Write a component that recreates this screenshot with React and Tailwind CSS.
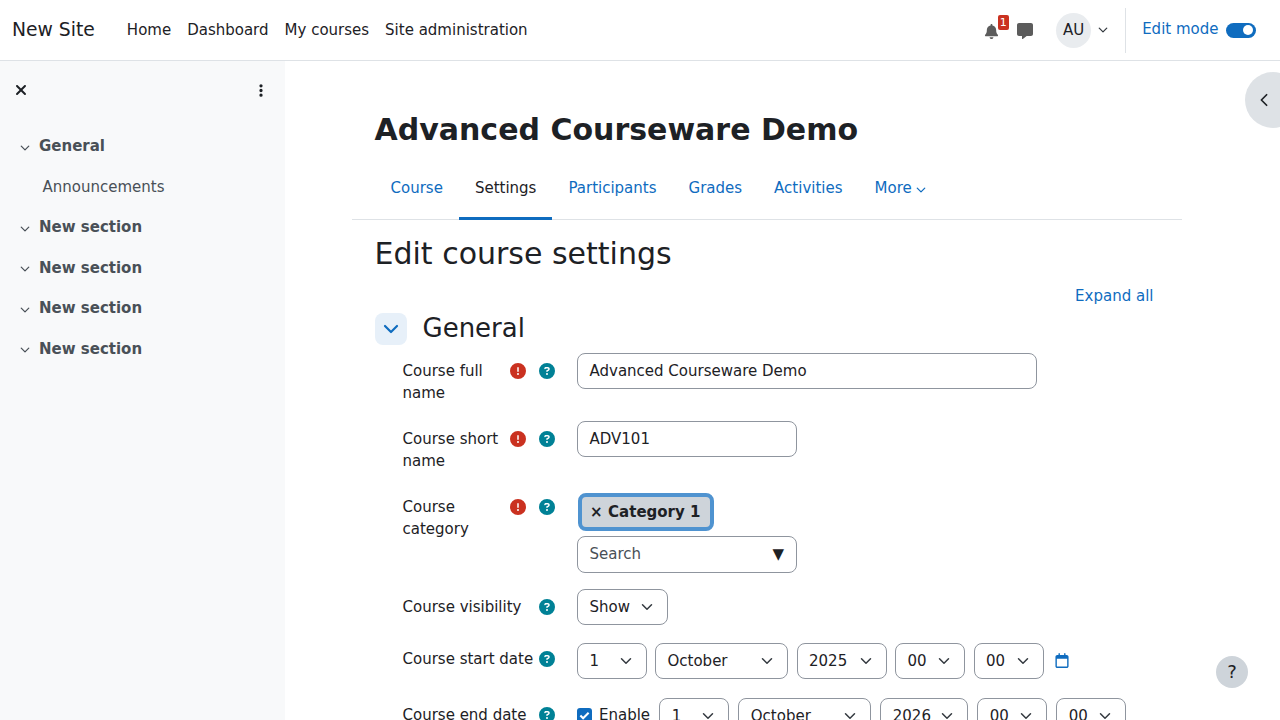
import React from "react";
import { FaBell, FaMessage, FaXmark, FaEllipsisVertical, FaCircleExclamation, FaCircleQuestion, FaRegCalendar } from "react-icons/fa6";

const Chev = ({ className = "", sw = 2 }) => (
  <svg viewBox="0 0 16 16" className={className} fill="none" stroke="currentColor" strokeWidth={sw} strokeLinecap="round" strokeLinejoin="round">
    <path d="M2 5l6 6 6-6" />
  </svg>
);

const Select = ({ w, children }) => (
  <div className={`${w} h-[36px] shrink-0 flex items-center justify-between pl-[11.5px] pr-[14px] pt-[1px] border border-[#8f959e] rounded-lg text-[#1d2125]`}>
    <span>{children}</span>
    <Chev className="w-[12px] h-[12px] text-[#343a40]" />
  </div>
);

const Section = ({ children }) => (
  <div className="h-[40.5px] flex items-center pl-[20px] font-bold text-[#495057]">
    <Chev className="w-[10px] h-[10px] mr-[9px] text-[#495057] mt-[3px]" />
    <span>{children}</span>
  </div>
);

const Row = ({ label, err, children, h, labelTop, iconTop }) => (
  <div className={`flex ${h}`}>
    <div className="w-[225px] shrink-0 pl-[50.5px] flex items-start">
      <div className={`flex-1 min-w-0 leading-[22px] text-[#1d2125] ${labelTop}`}>{label}</div>
      {err && (
        <div className={`w-[28.5px] shrink-0 ${iconTop}`}>
          <FaCircleExclamation className="mt-[3px] w-[16px] h-[16px] text-[#ca3120]" />
        </div>
      )}
      <div className={`w-[38.5px] shrink-0 ${iconTop}`}>
        <FaCircleQuestion className="mt-[3px] w-[16px] h-[16px] text-[#008196]" />
      </div>
    </div>
    <div className="flex-1 min-w-0">{children}</div>
  </div>
);

export default function App() {
  return (
    <div className="relative h-[720px] w-[1280px] overflow-hidden bg-white text-[15px] leading-[22.5px] text-[#1d2125] font-['DejaVu_Sans',sans-serif]">
      <header className="h-[61px] flex items-center border-b border-[#dee2e6] pl-[12px]">
        <span className="text-[18.75px] mr-[32px]">New Site</span>
        <nav className="flex gap-[16px]">
          <span>Home</span>
          <span>Dashboard</span>
          <span>My courses</span>
          <span>Site administration</span>
        </nav>
        <div className="ml-auto flex items-center h-full">
          <div className="relative mr-[18px] mt-[2px]">
            <FaBell className="w-[15px] h-[15px] text-[#5c5c5c]" />
            <span className="absolute -top-[9px] left-[14px] w-[11px] h-[15px] rounded-[2px] bg-[#ca3120] text-white text-[11px] leading-[15px] text-center">1</span>
          </div>
          <FaMessage className="w-[16px] h-[16px] text-[#5c5c5c] mr-[23.5px] mt-[2px]" />
          <div className="w-[35px] h-[35px] rounded-full bg-[#e9ecef] flex items-center justify-center text-[#1d2125]">AU</div>
          <Chev className="w-[10px] h-[10px] ml-[6.5px] mr-[17px] text-[#343a40]" />
          <div className="w-px h-[45px] bg-[#dee2e6] mr-[16.5px]" />
          <span className="text-[#0f6cbf] -mt-[2px] mr-[7.5px]">Edit mode</span>
          <div className="w-[30px] h-[15px] rounded-full bg-[#0f6cbf] flex items-center justify-end pr-[3px] mr-[24px]">
            <div className="w-[10px] h-[10px] rounded-full bg-white" />
          </div>
        </div>
      </header>

      <div className="flex h-[659px]">
        <aside className="w-[285px] shrink-0 bg-[#f8f9fa]">
          <div className="h-[65px] flex items-center justify-between pl-[14px] pr-[19px] pb-[7px]">
            <FaXmark className="w-[14px] h-[16px] text-[#1d2125]" />
            <FaEllipsisVertical className="w-[10px] h-[15px] text-[#1d2125]" />
          </div>
          <Section>General</Section>
          <div className="h-[40.5px] flex items-center pl-[42.5px] text-[#495057]">Announcements</div>
          <Section>New section</Section>
          <Section>New section</Section>
          <Section>New section</Section>
          <Section>New section</Section>
        </aside>

        <main className="flex-1 min-w-0 pl-[67px] pr-[98px]">
          <h1 className="pl-[22.5px] pt-[51px] text-[30px] leading-[36px] font-bold text-[#1d2125]">Advanced Courseware Demo</h1>
          <div className="mt-[15px] h-[57px] pl-[22.5px] flex border-b border-[#dee2e6]">
            {["Course", "Settings", "Participants", "Grades", "Activities"].map((t) => (
              <div key={t} className={`h-[57px] px-[16px] flex items-center pb-[3px] border-b-[3px] ${t === "Settings" ? "text-[#1d2125] border-[#0f6cbf]" : "text-[#0f6cbf] border-transparent"}`}>{t}</div>
            ))}
            <div className="h-[57px] pl-[16px] flex items-center pb-[6px] text-[#0f6cbf]">More<Chev className="w-[10px] h-[10px] ml-[4px] mt-[2px]" /></div>
          </div>
          <h2 className="pl-[22.5px] mt-[16px] text-[30px] leading-[36px] text-[#1d2125]">Edit course settings</h2>
          <div className="flex justify-end pr-[28.5px] mt-[13px] text-[#0f6cbf]">Expand all</div>
          <div className="pl-[23px] mt-[4px] flex items-center h-[34px]">
            <div className="w-[32px] h-[32px] rounded-lg bg-[#e7f0f9] flex items-center justify-center">
              <Chev className="w-[16px] h-[16px] text-[#0f6cbf]" sw={2.2} />
            </div>
            <span className="ml-[15.5px] -mt-[2px] text-[26px] leading-[32px]">General</span>
          </div>
          <div className="mt-[7px]">
            <Row label="Course full name" err h="h-[68px]" labelTop="pt-[7px]" iconTop="pt-[7px]">
              <div className="w-[460px] h-[36px] flex items-center pl-[11.5px] pr-3 pt-[1px] border border-[#8f959e] rounded-lg">Advanced Courseware Demo</div>
            </Row>
            <Row label="Course short name" err h="h-[68px]" labelTop="pt-[7px]" iconTop="pt-[7px]">
              <div className="w-[220px] h-[36px] flex items-center pl-[11.5px] pr-3 pt-[1px] border border-[#8f959e] rounded-lg">ADV101</div>
            </Row>
            <Row label="Course category" err h="h-[100px]" labelTop="pt-[7px]" iconTop="pt-[7px]">
              <div className="pt-[4px]">
                <div className="ml-[1px] w-[136px] h-[38px] flex items-center pl-[8px] pt-[1px] gap-[5.5px] rounded-lg border-[4px] border-[#4f93d0] bg-[#ced4da] font-bold">
                  <span>×</span><span>Category 1</span>
                </div>
                <div className="mt-[5px] w-[220px] h-[37px] flex items-center justify-between pl-[11.5px] pr-3 border border-[#8f959e] rounded-lg">
                  <span className="text-[#495057]">Search</span>
                  <span className="text-[#1d2125] text-[15px]">▼</span>
                </div>
              </div>
            </Row>
            <Row label="Course visibility" h="h-[54px]" labelTop="pt-[7px]" iconTop="pt-[7px]">
              <Select w="w-[91px]">Show</Select>
            </Row>
            <Row label="Course start date" h="h-[55px]" labelTop="pt-[5px]" iconTop="pt-[5px]">
              <div className="flex items-center gap-[8.5px]">
                <Select w="w-[69.5px]">1</Select>
                <Select w="w-[133px]">October</Select>
                <Select w="w-[90px]">2025</Select>
                <Select w="w-[70px]">00</Select>
                <Select w="w-[70px]">00</Select>
                <FaRegCalendar className="w-[14px] h-[15px] text-[#0f6cbf] ml-[3px]" />
              </div>
            </Row>
            <Row label="Course end date" h="h-[55px]" labelTop="pt-[6px]" iconTop="pt-[6px]">
              <div className="flex items-center gap-[9px]">
                <div className="flex items-center gap-[7px] mr-[0.2px]">
                  <div className="w-[15px] h-[15px] rounded-[3px] bg-[#0f6cbf] flex items-center justify-center">
                    <svg viewBox="0 0 16 16" className="w-[11px] h-[11px]" fill="none" stroke="white" strokeWidth="3"><path d="M2 8l4 4 8-8" /></svg>
                  </div>
                  <span>Enable</span>
                </div>
                <Select w="w-[70px]">1</Select>
                <Select w="w-[133px]">October</Select>
                <Select w="w-[88px]">2026</Select>
                <Select w="w-[70px]">00</Select>
                <Select w="w-[70px]">00</Select>
              </div>
            </Row>
          </div>
        </main>
      </div>

      <div className="absolute top-[72px] -right-[21px] w-[56px] h-[56px] rounded-full bg-[#dee2e6] flex items-center pl-[12px]">
        <svg viewBox="0 0 16 16" className="w-[14px] h-[14px] text-[#1d2125]" fill="none" stroke="currentColor" strokeWidth="2" strokeLinecap="round" strokeLinejoin="round"><path d="M11 2L5 8l6 6" /></svg>
      </div>
      <div className="absolute top-[656px] left-[1216px] w-[32px] h-[32px] rounded-full bg-[#ced4da] flex items-center justify-center text-[18px] text-[#1d2125]">?</div>
    </div>
  );
}
